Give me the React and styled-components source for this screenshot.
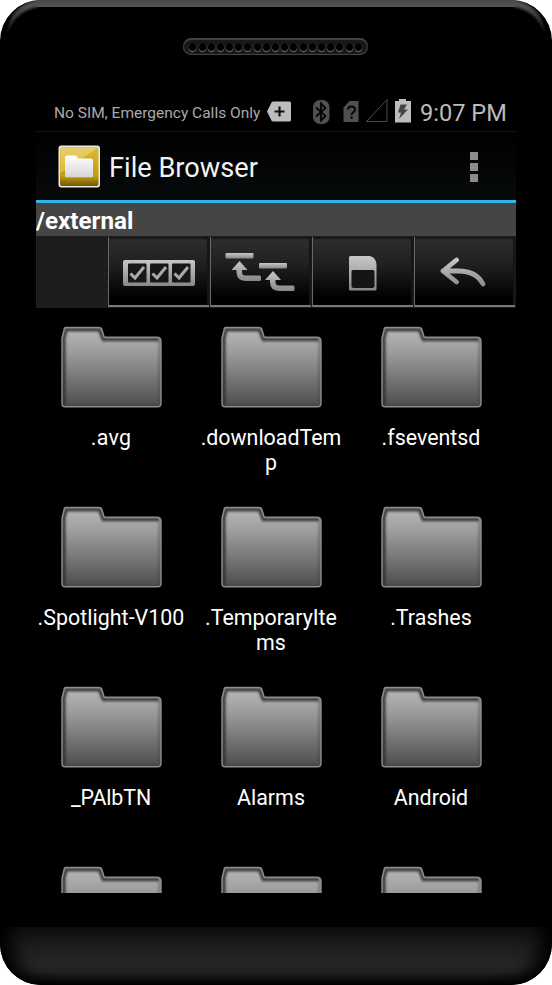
import React from "react";
import styled, { createGlobalStyle } from "styled-components";

const GlobalStyle = createGlobalStyle`
  *, *::before, *::after { box-sizing: border-box; }
  html, body { margin: 0; background: #fff; }
  body { font-family: Roboto, "Liberation Sans", sans-serif; }
  svg { display: block; }
`;

const Phone = styled.div`
  position: relative;
  display: flex;
  flex-direction: column;
  width: 552px;
  height: 985px;
  border-radius: 41px;
  background: #000;
  overflow: hidden;
`;

const TopBezel = styled.div`
  display: flex;
  flex: none;
  justify-content: center;
  height: 92px;
  padding-top: 38px;
`;

const TopSheen = styled.svg`
  position: absolute;
  top: 0;
  left: 0;
`;

const HiddenDefs = styled.svg`
  position: absolute;
`;

const Speaker = styled.div`
  display: flex;
  align-items: center;
  justify-content: center;
  width: 185px;
  height: 17px;
  margin-left: -1px;
  border-radius: 9px;
  background: #171717;
  box-shadow: inset 0 2px 1px #444, inset 0 -1px 1px #4a4a4a, inset 1px 0 1px #333, inset -1px 0 1px #333;
`;

const Hole = styled.span`
  width: 7px;
  height: 8px;
  margin: 1px 1.1px 0;
  border-radius: 50%;
  background: #000;
  box-shadow: 0 1px 1px #777, 0 0 1px #4a4a4a;
`;

const Screen = styled.main`
  display: flex;
  flex: none;
  flex-direction: column;
  width: 480px;
  height: 801px;
  margin-left: 36px;
  background: #000;
  overflow: hidden;
`;

const StatusBar = styled.header`
  display: flex;
  flex: none;
  align-items: center;
  height: 40px;
  padding: 1px 0 0 18px;
  border-bottom: 1px solid #141414;
  color: #b8b8b8;
`;

const Carrier = styled.span`
  flex: none;
  width: 213px;
  margin-top: 1px;
  font-size: 15.5px;
  line-height: 20px;
  white-space: nowrap;
  color: #a9a9a9;
`;

const Clock = styled.time`
  margin: 2px 0 0 9px;
  font-size: 23.6px;
  line-height: 30px;
  white-space: nowrap;
  color: #bcbcbc;
`;

const ActionBar = styled.div`
  display: flex;
  flex: none;
  align-items: center;
  height: 71px;
  padding: 0 38px 0 20px;
  border-bottom: 3px solid #33b5e5;
  background: linear-gradient(#000, #070a0b);
`;

const Title = styled.h1`
  flex: 1;
  margin: 3px 0 0 7px;
  color: #f3f3f3;
  font-size: 27.2px;
  font-weight: 400;
  line-height: 34px;
`;

const Overflow = styled.div`
  display: grid;
  gap: 3px;
  margin-top: 2px;
`;

const OverflowDot = styled.i`
  width: 8px;
  height: 8px;
  background: #8b8b8b;
`;

const PathBar = styled.div`
  flex: none;
  height: 33px;
  background: #454545;
  color: #fff;
  font-size: 24.2px;
  font-weight: 700;
  line-height: 36px;
`;

const Toolbar = styled.nav`
  display: grid;
  flex: none;
  grid-template-columns: 72px repeat(4, 102px);
  height: 72px;
  background: conic-gradient(#131313 25%, #202020 0 50%, #171717 0 75%, #282828 0) 0 0 / 2px 2px;
`;

const ToolButton = styled.button`
  display: flex;
  align-items: center;
  justify-content: center;
  height: 70px;
  margin: 1px 1px 0 0;
  padding: 4px 0 0;
  border: 0;
  border-left: 1px solid #696969;
  border-bottom: 2px solid #777;
  background: linear-gradient(#2e2e2e, #202020 40%, #000 90%);
  box-shadow: inset 0 2px 1px #171717, inset -2px 0 1px #171717;
`;

const Files = styled.section`
  display: grid;
  flex: 1;
  grid-template-columns: repeat(3, 150px);
  grid-auto-rows: 180px;
  column-gap: 10px;
  min-height: 0;
  padding-top: 18px;
  overflow: hidden;
`;

const FileItem = styled.article`
  display: flex;
  flex-direction: column;
  align-items: center;
`;

const FileName = styled.span`
  margin-top: 17px;
  color: #fff;
  font-size: 21.4px;
  line-height: 25px;
  letter-spacing: ${({ $tracking = 0 }) => $tracking}px;
  text-align: center;
  white-space: pre;
`;

const Chin = styled.footer`
  height: 58px;
  margin-top: auto;
  border-radius: 0 0 41px 41px;
  background: linear-gradient(#101010, #1d1d1d 35%, #262626 65%, #222 78%, #0c0c0c 94%, #000);
  box-shadow: inset 20px -3px 18px -8px #000, inset -20px -3px 18px -8px #000;
`;

const files = [
  [".avg", 0.3], [".downloadTem\np", 0], [".fseventsd"],
  [".Spotlight-V100", 0.03], [".TemporaryIte\nms"], [".Trashes", 0.05],
  ["_PAlbTN", -0.1], ["Alarms"], ["Android", 0],
  [""], [""], [""],
];

const metal = "url(#metal)";
const folderPath = "M4.5 1.4H38q2.4 0 3 2.3l2.2 7.6H96q4 0 4 4V77.8q0 3-3.5 3H4Q1 80.8 1 77.8V12L3 4Q3.4 1.4 4.5 1.4Z";

function Definitions() {
  return (
    <HiddenDefs width="0" height="0">
      <defs>
        <linearGradient id="metal" x1="0" y1="0" x2="0" y2="1">
          <stop stopColor="#c8c8c8" /><stop offset="1" stopColor="#888" />
        </linearGradient>
        <linearGradient id="folderFill" x1="0" y1="0" x2="0" y2="1">
          <stop stopColor="#b8b8b8" /><stop offset=".3" stopColor="#9d9d9d" /><stop offset="1" stopColor="#4d4d4d" />
        </linearGradient>
        <linearGradient id="gold" x1="0" y1="0" x2="0" y2="1">
          <stop stopColor="#d9bd4e" /><stop offset=".45" stopColor="#d0a911" /><stop offset=".75" stopColor="#c29b10" /><stop offset="1" stopColor="#705706" />
        </linearGradient>
        <linearGradient id="paper" x1="0" y1="0" x2="0" y2="1">
          <stop stopColor="#fff" /><stop offset="1" stopColor="#d5d5d8" />
        </linearGradient>
        <filter id="soft" x="-10%" y="-20%" width="120%" height="140%"><feGaussianBlur stdDeviation=".8" /></filter>
        <clipPath id="folderClip"><path d={folderPath} /></clipPath>
      </defs>
    </HiddenDefs>
  );
}

function Sheen() {
  return (
    <TopSheen width="552" height="46">
      <defs>
        <linearGradient id="sheen" x1="0" y1="0" x2="0" y2="7" gradientUnits="userSpaceOnUse">
          <stop stopColor="#484848" /><stop offset="1" stopColor="#555" />
        </linearGradient>
        <linearGradient id="cornerL" x1="6" y1="38" x2="30" y2="8" gradientUnits="userSpaceOnUse">
          <stop stopColor="#000" /><stop offset=".5" stopColor="#333" /><stop offset="1" stopColor="#505050" />
        </linearGradient>
        <linearGradient id="cornerR" x1="546" y1="38" x2="522" y2="8" gradientUnits="userSpaceOnUse">
          <stop stopColor="#000" /><stop offset=".5" stopColor="#333" /><stop offset="1" stopColor="#505050" />
        </linearGradient>
      </defs>
      <path d="M36 0H516V7H36Z" fill="url(#sheen)" />
      <path d="M38 0Q19 3 11 18Q7 27 7 40Q11 12 38 7Z" fill="url(#cornerL)" filter="url(#soft)" />
      <path d="M514 0Q533 3 541 18Q545 27 545 40Q541 12 514 7Z" fill="url(#cornerR)" filter="url(#soft)" />
    </TopSheen>
  );
}

function FolderIcon() {
  return (
    <svg width="101" height="82" viewBox="0 0 101 82">
      <path d={folderPath} fill="url(#folderFill)" />
      <g clipPath="url(#folderClip)">
        <path d="M2.8 81V12L5 3.7H38.5L42.5 13.5H98" fill="none" stroke="#303030" strokeWidth="3.6" opacity=".9" filter="url(#soft)" />
        <path d="M98.5 14V79.3H3" fill="none" stroke="#3c3c3c" strokeWidth="2" opacity=".5" filter="url(#soft)" />
      </g>
      <path d={folderPath} fill="none" stroke="#8d8d8d" strokeWidth="1.4" />
    </svg>
  );
}

function AppIcon() {
  return (
    <svg width="46" height="46" viewBox="0 0 46 46">
      <rect x="2.5" y="2.5" width="41.5" height="42" rx="3" fill="#eeeade" />
      <rect x="4" y="4" width="38.5" height="39" rx="2" fill="url(#gold)" />
      <path d="M4.5 4.5H42L4.5 30Z" fill="#fff2b5" opacity=".35" />
      <path d="M9 35V16q0-2 2-2H19q2 0 3 3H35q2 0 2 2V35Z" fill="#644c00" opacity=".5" />
      <path d="M9 33.5V14.5q0-2 2-2H19q2 0 3 3H35q2 0 2 2V33.5q0 1-1 1H10q-1 0-1-1Z" fill="url(#paper)" />
    </svg>
  );
}

function StatusIcons() {
  return (
    <svg width="144" height="28" viewBox="0 0 144 28">
      <path d="M6 3.5H22.5Q24 3.5 24 5V22Q24 23.5 22.5 23.5H6Q4.5 23.5 3.5 20.5L0 13.5 3.5 6.5Q4.5 3.5 6 3.5Z" fill="#bdbdbd" />
      <path d="M12.5 8.5V18.5M7.5 13.5H17.5" stroke="#111" strokeWidth="2.2" />
      <rect x="46" y="2" width="16.5" height="24" rx="7" fill="#505050" />
      <path d="M49 9.5 58.5 18 54 22.5V5.5L58.5 10 49 18.5" fill="none" stroke="#050505" strokeWidth="1.8" />
      <path d="M82.5 3H91.5V24H76.5V9.5Z" fill="#505050" />
      <path d="M81 11.5Q81 8.5 84.5 8.5Q88 8.5 88 11.5Q88 13.5 86 14.5Q84.5 15.5 84.5 17" fill="none" stroke="#050505" strokeWidth="2" /><path d="M83.5 18.5h2.2v2.2h-2.2z" />
      <path d="M99.5 23.5H120V1.5Z" fill="none" stroke="#4c4c4c" />
      <path d="M132 1H139V3H144V24.5H128V3H132Z" fill="#bdbdbd" />
      <path d="M133.5 6.5H140L137 11.5H141L132 21 134 14.5H131Z" fill="#444" />
    </svg>
  );
}

function SelectIcon() {
  return (
    <svg width="73" height="26" viewBox="0 0 73 26">
      <rect width="72" height="26" rx="2" fill={metal} />
      {[5, 27, 49].map((x) => (
        <g key={x}>
          <rect x={x} y="3.5" width="18.5" height="19" rx="1" fill="#171717" />
          <path d={`M${x + 2.5} 13.5l4.5 4.5 9-11`} fill="none" stroke="#a9a9a9" strokeWidth="3.1" />
        </g>
      ))}
    </svg>
  );
}

function MoveIcon() {
  return (
    <svg width="74" height="40" viewBox="0 0 74 40">
      {[[0, 0], [33.5, 10]].map(([x, y]) => (
        <g key={x} transform={`translate(${x + 1.5} ${y})`} fill={metal}>
          <rect width="28" height="5.4" rx="1" />
          <path d="M14 8 22 17H16.5V19Q16.5 22.5 20 22.5H34Q35.5 22.5 35.5 24V26.5Q35.5 28 34 28H20Q11 27.5 11 19V17H6Z" />
        </g>
      ))}
    </svg>
  );
}

function CardIcon() {
  return (
    <svg width="28" height="35" viewBox="0 0 28 35">
      <path d="M1.5 0H21Q27 2 27.5 8V33Q27.5 34.5 26 34.5H1.5Q0 34.5 0 33V1.5Q0 0 1.5 0Z" fill={metal} />
      <path d="M4 14H24Q25.5 14 25.5 15.5V30.5L24 32H4.5Q2.5 32 2.5 30V15.5Q2.5 14 4 14Z" fill="#151515" />
    </svg>
  );
}

function BackIcon() {
  return (
    <svg width="50" height="32" viewBox="0 0 50 32">
      <defs>
        <linearGradient id="backMetal" x1="0" y1="0" x2="0" y2="30" gradientUnits="userSpaceOnUse">
          <stop stopColor="#ccc" /><stop offset="1" stopColor="#888" />
        </linearGradient>
      </defs>
      <path d="M16.5 3 3 14 16.5 25M3 14H17Q36 13.5 43 27" fill="none" stroke="url(#backMetal)" strokeWidth="4.8" strokeLinecap="round" strokeLinejoin="round" />
    </svg>
  );
}

export default function App() {
  return (
    <>
      <GlobalStyle />
      <Definitions />
      <Phone>
        <Sheen />
        <TopBezel>
          <Speaker>{Array.from({ length: 19 }, (_, i) => <Hole key={i} />)}</Speaker>
        </TopBezel>
        <Screen>
          <StatusBar>
            <Carrier>No SIM, Emergency Calls Only</Carrier>
            <StatusIcons />
            <Clock>9:07 PM</Clock>
          </StatusBar>
          <ActionBar>
            <AppIcon />
            <Title>File Browser</Title>
            <Overflow><OverflowDot /><OverflowDot /><OverflowDot /></Overflow>
          </ActionBar>
          <PathBar>/external</PathBar>
          <Toolbar>
            <span />
            <ToolButton aria-label="Select all"><SelectIcon /></ToolButton>
            <ToolButton aria-label="Move"><MoveIcon /></ToolButton>
            <ToolButton aria-label="Storage"><CardIcon /></ToolButton>
            <ToolButton aria-label="Back"><BackIcon /></ToolButton>
          </Toolbar>
          <Files>
            {files.map(([name, tracking], i) => (
              <FileItem key={i}>
                <FolderIcon />
                <FileName $tracking={tracking}>{name}</FileName>
              </FileItem>
            ))}
          </Files>
        </Screen>
        <Chin />
      </Phone>
    </>
  );
}
